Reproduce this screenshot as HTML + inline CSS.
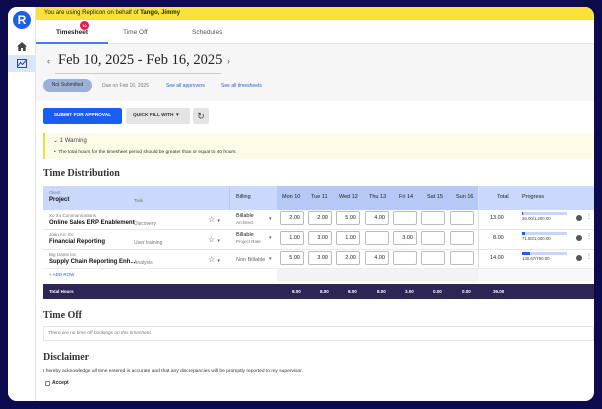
<!DOCTYPE html>
<html><head><style>
*{margin:0;padding:0;box-sizing:border-box}
body{width:602px;height:409px;background:#0b0b4e;font-family:"Liberation Sans",sans-serif;position:relative;overflow:hidden;color:#222}
.panel{position:absolute;left:8px;top:7px;width:586px;height:394px;background:#fff;border-radius:9px;overflow:hidden}
.side{position:absolute;left:0;top:0;width:28px;height:100%;border-right:1px solid #e4e4e4;background:#fff;z-index:2}
.logo{position:absolute;left:5px;top:4px;width:18px;height:18px;border-radius:50%;background:#1d5de8;color:#fff;font-weight:bold;font-size:12px;text-align:center;line-height:18px}
.main{position:absolute;left:20px;top:-7px;right:0;bottom:0}
.banner{position:absolute;left:8px;right:0;top:7px;height:13px;background:#f8e23a;font-size:6px;line-height:13px;padding-left:8px}
.tabs{position:absolute;left:8px;right:0;top:20px;height:24px;border-bottom:1px solid #e6e6e6;font-size:6.5px;font-weight:bold;color:#555;background:#fff}
.tabs span{position:absolute;top:9px}
.grey{position:absolute;left:8px;right:0;top:44px;height:57px;background:#f6f6f6}
.abs{position:absolute}
.serif{font-family:"Liberation Serif",serif}
.inp{position:absolute;width:24px;height:14px;border:1px solid #bbb;border-radius:2px;background:#fff;font-size:5.5px;text-align:right;padding-right:3px;line-height:12px}
.sm{font-size:4.5px;color:#777}
.b{font-weight:bold;font-size:6px;color:#111}
</style></head><body>
<div class="panel">
 <div class="side">
  <div class="logo">R</div>
  <svg class="abs" style="left:9px;top:35px" width="10" height="9" viewBox="0 0 10 9"><path d="M5 0L0 4.5h1.3V9h2.7V6h2v3h2.7V4.5H10z" fill="#444"/></svg>
  <div class="abs" style="left:0;top:48px;width:28px;height:17px;background:#dbe5fb"></div>
  <svg class="abs" style="left:9px;top:52px" width="10" height="9"><rect x="0.5" y="0.5" width="9" height="8" fill="none" stroke="#2b4aa8"/><path d="M1 7L3.5 3.5 5.5 5.5 9 1.5" stroke="#2b4aa8" fill="none"/></svg>
 </div>
 <div class="main">
  <div class="banner">You are using Replicon on behalf of <b>Tango, Jimmy</b></div>
  <div class="tabs">
   <span style="left:20px;color:#222">Timesheet</span>
   <div class="abs" style="left:44px;top:1px;width:9px;height:9px;border-radius:50%;background:#e8194b;color:#fff;font-size:4px;text-align:center;line-height:9px">10</div>
   <span style="left:87px;font-weight:normal">Time Off</span>
   <span style="left:156px;font-weight:normal">Schedules</span>
   <div class="abs" style="left:0;top:22px;width:72px;height:2px;background:#4a7be8"></div>
  </div>
  <div class="grey"></div>
  <div class="abs" style="left:19px;top:56px;font-size:9px;color:#555">‹</div>
  <div class="abs serif" style="left:30px;top:52px;font-size:14.5px;color:#222">Feb 10, 2025 - Feb 16, 2025</div>
  <div class="abs" style="left:27px;top:73px;width:166px;height:1px;background:#ccc"></div>
  <div class="abs" style="left:199px;top:56px;font-size:9px;color:#555">›</div>
  <div class="abs" style="left:15px;top:79px;width:49px;height:13px;border-radius:7px;background:#9bb0d6;font-size:5px;text-align:center;line-height:13px;color:#333">Not Submitted</div>
  <div class="abs" style="left:74px;top:83px;font-size:5px;color:#777">Due on Feb 16, 2025</div>
  <div class="abs" style="left:138px;top:83px;font-size:5px;color:#2a5fd8">See all approvers</div>
  <div class="abs" style="left:193px;top:83px;font-size:5px;color:#2a5fd8">See all timesheets</div>
  <div class="abs" style="left:15px;top:108px;width:79px;height:16px;background:#1a5ef0;border-radius:2px;color:#fff;font-size:4.8px;font-weight:bold;text-align:center;line-height:16px">SUBMIT FOR APPROVAL</div>
  <div class="abs" style="left:98px;top:108px;width:64px;height:16px;background:#e4e4e4;border-radius:2px;font-size:4.8px;font-weight:bold;line-height:16px;padding-left:7px;color:#333">QUICK FILL WITH &nbsp;▾</div>
  <div class="abs" style="left:165px;top:108px;width:16px;height:16px;background:#e4e4e4;border-radius:2px;font-size:9px;text-align:center;line-height:16px;color:#444">↻</div>
  <div class="abs" style="left:15px;top:133px;right:0;height:26px;background:#fdfbe8;border-left:2px solid #f2dc3c"></div>
  <div class="abs" style="left:25px;top:137px;font-size:6px;color:#444">⌄ 1 Warning</div>
  <div class="abs" style="left:26px;top:150px;font-size:4.8px;color:#333">• &nbsp;The total hours for the timesheet period should be greater than or equal to 40 hours.</div>
  <div class="abs serif" style="left:15px;top:168px;font-size:10px;font-weight:bold;color:#333">Time Distribution</div>
  <div class="abs" style="left:15px;top:186px;right:0;height:24px;background:#c9d8fb"></div>
  <div class="abs" style="left:249px;top:186px;width:201px;height:24px;background:#b5c8f6"></div>
  <div class="abs" style="left:450px;top:186px;width:1px;height:96px;background:#e0e0e0"></div>
  <div class="abs" style="left:450px;top:268px;right:0;height:14px;background:#f8f8f8"></div>
  <div class="abs" style="left:249px;top:268px;width:201px;height:14px;background:#f3f3f3"></div>
  <div class="abs sm" style="left:21px;top:190px">Client</div>
  <div class="abs b" style="left:21px;top:197px">Project</div>
  <div class="abs sm" style="left:106px;top:198px">Task</div>
  <div class="abs" style="left:201px;top:186px;width:1px;height:24px;background:#b5c8f6"></div>
  <div class="abs" style="left:208px;top:194px;font-size:5.5px">Billing</div>
  <div class="abs" style="left:254px;top:194px;font-size:5.5px">Mon 10</div>
  <div class="abs" style="left:283px;top:194px;font-size:5.5px">Tue 11</div>
  <div class="abs" style="left:311px;top:194px;font-size:5.5px">Wed 12</div>
  <div class="abs" style="left:341px;top:194px;font-size:5.5px">Thu 13</div>
  <div class="abs" style="left:371px;top:194px;font-size:5.5px">Fri 14</div>
  <div class="abs" style="left:399px;top:194px;font-size:5.5px">Sat 15</div>
  <div class="abs" style="left:428px;top:194px;font-size:5.5px">Sun 16</div>
  <div class="abs" style="left:469px;top:194px;font-size:5.5px">Total</div>
  <div class="abs" style="left:494px;top:194px;font-size:5.5px">Progress</div>

  <div class="abs" style="left:15px;top:229px;right:0;height:1px;background:#e6e6e6"></div>
  <div class="abs" style="left:15px;top:249px;right:0;height:1px;background:#e6e6e6"></div>
  <div class="abs" style="left:15px;top:268px;right:0;height:1px;background:#ececec"></div>

  <div class="abs sm" style="left:21px;top:213px">Xo Xo Communications</div>
  <div class="abs b" style="left:21px;top:220px">Online Sales ERP Enablement</div>
  <div class="abs sm" style="left:106px;top:221px;font-size:5px">Discovery</div>
  <div class="abs sm" style="left:21px;top:232px">Joan Arc Inc</div>
  <div class="abs b" style="left:21px;top:239px">Financial Reporting</div>
  <div class="abs sm" style="left:106px;top:240px;font-size:5px">User training</div>
  <div class="abs sm" style="left:21px;top:252px">Big Game Inc</div>
  <div class="abs b" style="left:21px;top:259px">Supply Chain Reporting Enh...</div>
  <div class="abs sm" style="left:106px;top:260px;font-size:5px">Analysis</div>

  <div class="abs" style="left:180px;top:215px;font-size:8px;color:#555">☆ <span style="font-size:5px">▾</span></div>
  <div class="abs" style="left:180px;top:235px;font-size:8px;color:#555">☆ <span style="font-size:5px">▾</span></div>
  <div class="abs" style="left:180px;top:255px;font-size:8px;color:#555">☆ <span style="font-size:5px">▾</span></div>

  <div class="abs" style="left:208px;top:213px;font-size:5.5px">Billable</div><div class="abs sm" style="left:208px;top:220px">Architect</div>
  <div class="abs" style="left:208px;top:232px;font-size:5.5px">Billable</div><div class="abs sm" style="left:208px;top:239px">Project Rate</div>
  <div class="abs" style="left:208px;top:257px;font-size:5.5px;color:#666">Non Billable</div>
  <div class="abs" style="left:241px;top:216px;font-size:5px;color:#555">▾</div>
  <div class="abs" style="left:241px;top:235px;font-size:5px;color:#555">▾</div>
  <div class="abs" style="left:241px;top:256px;font-size:5px;color:#555">▾</div>

  <div class="inp" style="left:252px;top:211px">2.00</div><div class="inp" style="left:280px;top:211px">2.00</div><div class="inp" style="left:308px;top:211px">5.00</div><div class="inp" style="left:337px;top:211px">4.00</div><div class="inp" style="left:365px;top:211px"></div><div class="inp" style="left:393px;top:211px"></div><div class="inp" style="left:422px;top:211px"></div>
  <div class="inp" style="left:252px;top:231px">1.00</div><div class="inp" style="left:280px;top:231px">3.00</div><div class="inp" style="left:308px;top:231px">1.00</div><div class="inp" style="left:337px;top:231px"></div><div class="inp" style="left:365px;top:231px">3.00</div><div class="inp" style="left:393px;top:231px"></div><div class="inp" style="left:422px;top:231px"></div>
  <div class="inp" style="left:252px;top:251px">5.00</div><div class="inp" style="left:280px;top:251px">3.00</div><div class="inp" style="left:308px;top:251px">2.00</div><div class="inp" style="left:337px;top:251px">4.00</div><div class="inp" style="left:365px;top:251px"></div><div class="inp" style="left:393px;top:251px"></div><div class="inp" style="left:422px;top:251px"></div>

  <div class="abs" style="left:462px;top:215px;font-size:5.5px">13.00</div>
  <div class="abs" style="left:465px;top:235px;font-size:5.5px">8.00</div>
  <div class="abs" style="left:462px;top:255px;font-size:5.5px">14.00</div>

  <div class="abs" style="left:494px;top:212px;width:45px;height:3px;background:#c6d6fb"><div style="width:1px;height:3px;background:#1a5ef0"></div></div>
  <div class="abs" style="left:494px;top:216px;font-size:4.3px;color:#444">26.00/1,200.00</div>
  <div class="abs" style="left:494px;top:232px;width:45px;height:3px;background:#c6d6fb"><div style="width:3px;height:3px;background:#1a5ef0"></div></div>
  <div class="abs" style="left:494px;top:236px;font-size:4.3px;color:#444">71.50/1,000.00</div>
  <div class="abs" style="left:494px;top:252px;width:45px;height:3px;background:#c6d6fb"><div style="width:8px;height:3px;background:#1a5ef0"></div></div>
  <div class="abs" style="left:494px;top:256px;font-size:4.3px;color:#444">130.67/750.00</div>
  <div class="abs" style="left:548px;top:215px;width:6px;height:6px;border-radius:50%;background:#555"></div><div class="abs" style="left:558px;top:213px;font-size:6px;color:#555">⋮</div>
  <div class="abs" style="left:548px;top:235px;width:6px;height:6px;border-radius:50%;background:#555"></div><div class="abs" style="left:558px;top:233px;font-size:6px;color:#555">⋮</div>
  <div class="abs" style="left:548px;top:255px;width:6px;height:6px;border-radius:50%;background:#555"></div><div class="abs" style="left:558px;top:253px;font-size:6px;color:#555">⋮</div>

  <div class="abs" style="left:21px;top:272px;font-size:4.5px;color:#2a5fd8">+ ADD ROW</div>

  <div class="abs" style="left:15px;top:284px;right:0;height:15px;background:#2d2554;color:#fff;font-size:4.5px;font-weight:bold">
   <span class="abs" style="left:6px;top:5px">Total Hours</span>
   <span class="abs" style="left:249px;top:5px">8.00</span><span class="abs" style="left:277px;top:5px">8.00</span><span class="abs" style="left:305px;top:5px">8.00</span><span class="abs" style="left:334px;top:5px">8.00</span><span class="abs" style="left:362px;top:5px">3.00</span><span class="abs" style="left:390px;top:5px">0.00</span><span class="abs" style="left:419px;top:5px">0.00</span><span class="abs" style="left:450px;top:5px">35.00</span>
  </div>

  <div class="abs serif" style="left:15px;top:310px;font-size:10px;font-weight:bold;color:#333">Time Off</div>
  <div class="abs" style="left:15px;top:326px;right:0;height:15px;border:1px solid #e6e6e6;font-size:4.8px;font-style:italic;color:#777;padding:4px 4px">There are no time off bookings on this timesheet.</div>
  <div class="abs serif" style="left:15px;top:352px;font-size:10px;font-weight:bold;color:#333">Disclaimer</div>
  <div class="abs" style="left:15px;top:369px;font-size:4.9px;color:#333">I hereby acknowledge all time entered is accurate and that any discrepancies will be promptly reported to my supervisor.</div>
  <div class="abs" style="left:17px;top:381px;width:5px;height:5px;border:1px solid #777;border-radius:1px"></div>
  <div class="abs" style="left:24px;top:380px;font-size:5px;font-weight:bold">Accept</div>
 </div>
</div>
</body></html>
